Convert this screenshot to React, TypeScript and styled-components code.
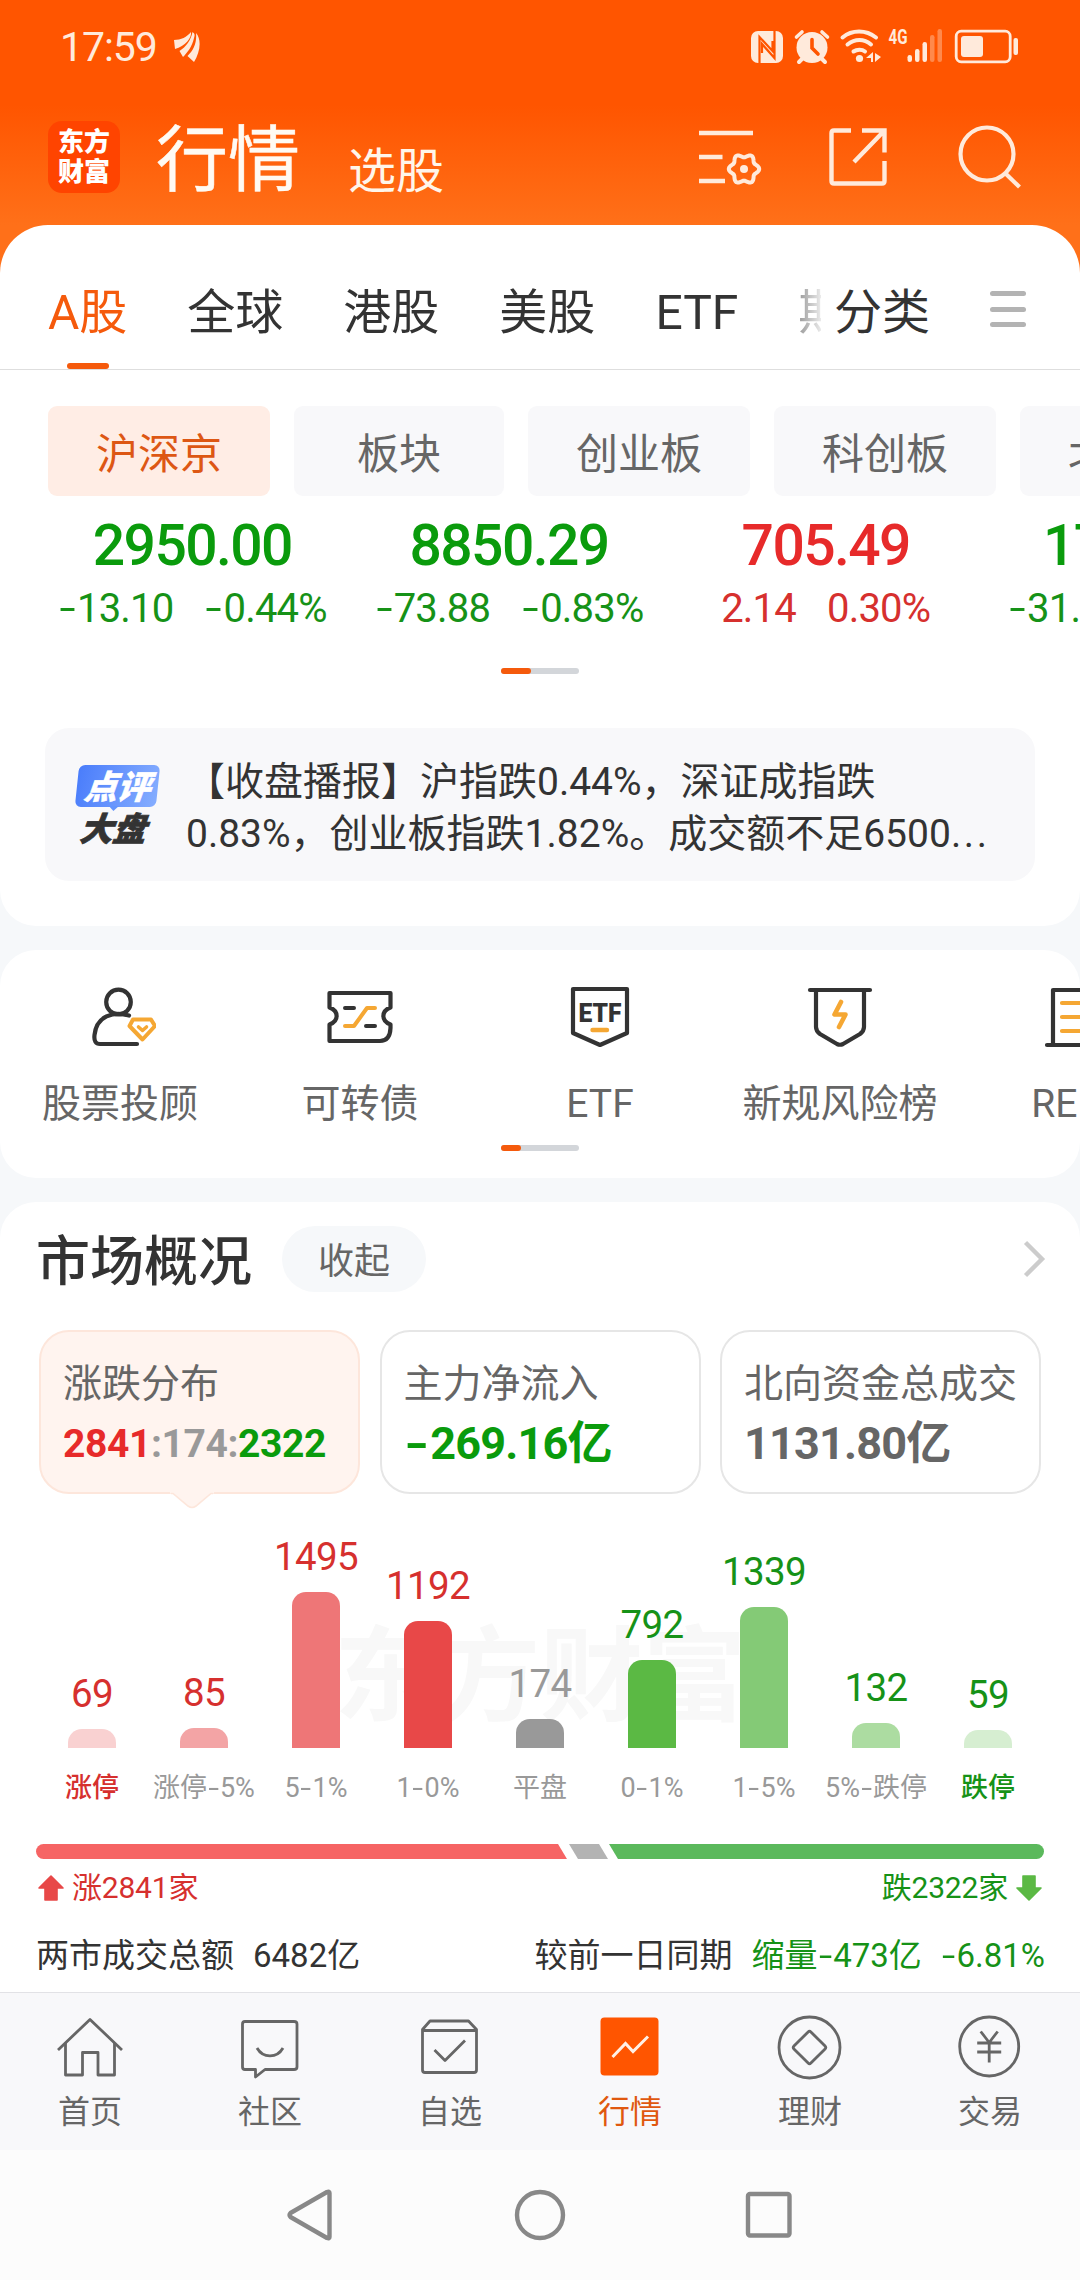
import React from "react";
import styled, { createGlobalStyle } from "styled-components";

const RED = "#d6302e";
const RED_STRONG = "#e72a2a";
const GREEN = "#169217";
const GREEN_STRONG = "#0a9b0c";
const ORANGE = "#f55a0c";
const INK = "#333333";
const GREY = "#666666";
const LIGHT = "#999999";
const CREAM = "#ffeadb";

const GlobalStyle = createGlobalStyle`
  * { box-sizing: border-box; }
  body {
    margin: 0;
    background: #f6f8fa;
    font-family: Roboto, "Noto Sans CJK SC", sans-serif;
    color: ${INK};
  }
`;

const Screen = styled.main`
  width: 1080px;
  height: 2280px;
  overflow: hidden;
  display: flex;
  flex-direction: column;
  background: #f6f8fa;
`;

const Masthead = styled.header`
  flex: none;
  height: 285px;
  margin-bottom: -60px;
  background: linear-gradient(#ff5500 0 105px, #ff7019 225px);
`;

const StatusBar = styled.div`
  height: 92px;
  padding: 2px 61px 0 60px;
  display: flex;
  align-items: center;
  color: ${CREAM};
`;

const Clock = styled.span`
  font-size: 41px;
  line-height: 48px;
  letter-spacing: -1.1px;
  font-weight: 400;
  margin-right: 17px;
`;

const StatusIcons = styled.div`
  margin-left: auto;
  display: flex;
  align-items: center;
`;

const TitleBar = styled.div`
  height: 130px;
  padding: 0 54px 0 48px;
  display: flex;
  align-items: center;
`;

const Logo = styled.div`
  width: 72px;
  height: 72px;
  border-radius: 14px;
  background: #ff4400;
  color: #fff;
  font-size: 26px;
  font-weight: 900;
  line-height: 30px;
  text-align: center;
  padding-top: 6px;
`;

const Title = styled.h1`
  margin: 8px 0 0 36px;
  font-size: 72px;
  line-height: 80px;
  font-weight: 400;
  -webkit-text-stroke: 0.5px #fffaf3;
  color: #fffaf3;
`;

const SubTitle = styled.span`
  margin: 30px auto 0 48px;
  font-size: 48px;
  line-height: 56px;
  color: #fff6ea;
`;

const TitleActions = styled.div`
  display: flex;
  gap: 57px;
`;

const Panel = styled.section<{ $h: number; $gap?: number }>`
  flex: none;
  height: ${(p) => p.$h}px;
  margin-bottom: ${(p) => p.$gap ?? 24}px;
  background: #fff;
  border-radius: 36px;
  overflow: hidden;
  display: flex;
  flex-direction: column;
`;

const TopPanel = styled(Panel)`
  border-radius: 48px 48px 36px 36px;
`;

const LastPanel = styled(Panel)`
  border-radius: 36px 36px 0 0;
`;

const TabBar = styled.nav`
  flex: none;
  height: 145px;
  border-bottom: 1px solid #dedede;
  display: flex;
  align-items: center;
  padding-right: 51px;
`;

const TabScroller = styled.div`
  width: 821px;
  height: 144px;
  flex: none;
  padding-left: 48px;
  display: flex;
  gap: 60px;
  overflow: hidden;
  mask-image: linear-gradient(to right, #000 770px, rgba(0, 0, 0, 0.1) 821px);
`;

const Tab = styled.span<{ $active?: boolean }>`
  flex: none;
  position: relative;
  font-size: 48px;
  line-height: 112px;
  padding-top: 32px;
  height: 144px;
  white-space: nowrap;
  color: ${(p) => (p.$active ? ORANGE : INK)};
  &::after {
    content: "";
    display: ${(p) => (p.$active ? "block" : "none")};
    position: absolute;
    left: calc(50% - 21px);
    bottom: 0;
    width: 42px;
    height: 6px;
    border-radius: 3px;
    background: ${ORANGE};
  }
`;

const Category = styled(Tab)`
  margin: 0 auto 0 13px;
`;

const MenuLines = styled.div`
  width: 36px;
  height: 36px;
  margin: 24px 3px 0 0;
  display: flex;
  flex-direction: column;
  justify-content: space-between;
  i {
    height: 5px;
    border-radius: 3px;
    background: #b3b3b3;
  }
`;

const Chips = styled.div`
  display: flex;
  gap: 24px;
  padding: 36px 0 0 48px;
  flex: none;
`;

const Chip = styled.button<{ $active?: boolean }>`
  flex: none;
  min-width: 210px;
  height: 90px;
  padding: 7px 48px 0;
  border: 0;
  border-radius: 9px;
  font-family: inherit;
  font-size: 42px;
  line-height: 60px;
  background: ${(p) => (p.$active ? "#ffede5" : "#f8f8fa")};
  color: ${(p) => (p.$active ? "#dd5714" : GREY)};
`;

const Indices = styled.div`
  display: flex;
  padding: 16px 0 0 34px;
  flex: none;
`;

const IndexCell = styled.div<{ $up?: boolean }>`
  flex: none;
  width: 316.7px;
  display: flex;
  flex-direction: column;
  align-items: center;
  color: ${(p) => (p.$up ? RED : GREEN)};
  strong {
    font-size: 57px;
    line-height: 68px;
    font-weight: 500;
    letter-spacing: -1.6px;
    color: ${(p) => (p.$up ? RED_STRONG : GREEN_STRONG)};
  }
`;

const Delta = styled.div`
  display: flex;
  gap: 31px;
  font-size: 40px;
  line-height: 48px;
  letter-spacing: -0.8px;
  margin-top: 5px;
`;

const MinusSign = styled.span`
  display: inline-block;
  margin: 0 0.1em;
  letter-spacing: 0;
  transform: scaleX(1.45);
`;

const Pager = styled.div<{ $top: number; $w: number }>`
  flex: none;
  width: 78px;
  height: 6px;
  margin: ${(p) => p.$top}px auto 0;
  border-radius: 3px;
  background: #d3d6da;
  &::before {
    content: "";
    display: block;
    width: ${(p) => p.$w}px;
    height: 6px;
    border-radius: 3px;
    background: ${ORANGE};
  }
`;

const News = styled.article`
  flex: none;
  margin: 54px 45px 0;
  height: 153px;
  border-radius: 24px;
  background: #f8f8fa;
  display: flex;
  padding: 28px 36px 0 30px;
`;

const NewsBadge = styled.div`
  width: 85px;
  margin: 9px 26px 0 0;
  flex: none;
  display: flex;
  flex-direction: column;
  align-items: center;
  font-style: italic;
  font-weight: 900;
  font-size: 33px;
`;

const BadgeTop = styled.div`
  position: relative;
  width: 81px;
  height: 42px;
  border-radius: 6px;
  transform: skewX(-6deg);
  background: linear-gradient(100deg, #4a7dfb, #85adff);
  color: #fff;
  text-align: center;
  line-height: 42px;
  padding-top: 2px;
  -webkit-text-stroke: 0.5px #fff;
  &::after {
    content: "";
    position: absolute;
    left: 34px;
    top: 41px;
    border: 5px solid transparent;
    border-top-color: #6394fd;
    border-bottom: 0;
  }
`;

const BadgeBottom = styled.div`
  line-height: 36px;
  margin: 5px 9px 0 0;
  transform: skewX(-6deg);
  -webkit-text-stroke: 0.8px ${INK};
`;

const NewsText = styled.p`
  margin: 0;
  font-size: 39px;
  line-height: 52px;
  white-space: nowrap;
`;

const Dots = styled.span`
  letter-spacing: 2.6px;
`;

const Shortcuts = styled.div`
  display: flex;
  flex: none;
  padding-top: 31px;
`;

const Shortcut = styled.div`
  flex: none;
  width: 240px;
  display: flex;
  flex-direction: column;
  align-items: center;
  font-size: 39px;
  line-height: 48px;
  color: ${GREY};
  svg {
    margin-bottom: 27px;
  }
`;

const SectionHead = styled.div`
  flex: none;
  height: 114px;
  padding: 24px 34px 24px 36px;
  display: flex;
  align-items: center;
  h2 {
    margin: 7px 30px 0 0;
    font-size: 54px;
    line-height: 66px;
    font-weight: 500;
  }
`;

const Pill = styled.button`
  width: 144px;
  height: 66px;
  padding: 5px 0 0;
  border: 0;
  border-radius: 33px;
  background: #f6f8fa;
  font-family: inherit;
  font-size: 36px;
  line-height: 60px;
  color: ${GREY};
  margin-right: auto;
`;

const StatCards = styled.div`
  flex: none;
  display: flex;
  gap: 19.5px;
  padding: 14px 39px 0;
`;

const StatCard = styled.div<{ $active?: boolean }>`
  position: relative;
  flex: none;
  width: 321px;
  height: 164px;
  padding: 28px 0 0 22px;
  border-radius: 30px;
  border: 2px solid ${(p) => (p.$active ? "#fde6db" : "#e6e6e6")};
  background: ${(p) => (p.$active ? "#fff4ef" : "#fff")};
  font-size: 39px;
  line-height: 48px;
  color: ${GREY};
  white-space: nowrap;
`;

const StatTail = styled.svg`
  position: absolute;
  left: 129px;
  top: 159px;
`;

const StatValue = styled.div<{ $size: number; $color?: string }>`
  font-size: ${(p) => p.$size}px;
  font-weight: 700;
  line-height: 56px;
  letter-spacing: ${(p) => (p.$size > 40 ? -0.8 : -0.4)}px;
  margin-top: 8px;
  color: ${(p) => p.$color ?? GREY};
`;

const Tone = styled.span<{ $color: string }>`
  color: ${(p) => p.$color};
`;

const Chart = styled.div`
  flex: none;
  position: relative;
  height: 314px;
  padding: 0 36px;
  display: flex;
`;

const Watermark = styled.div`
  position: absolute;
  left: 334px;
  top: 119px;
  font-size: 103px;
  line-height: 130px;
  font-weight: 700;
  color: #f8f8f8;
`;

const BarColumn = styled.div<{ $color: string }>`
  position: relative;
  flex: none;
  width: 112px;
  height: 314px;
  display: flex;
  flex-direction: column;
  align-items: center;
  justify-content: flex-end;
  font-size: 38.5px;
  line-height: 46px;
  letter-spacing: -0.6px;
  color: ${(p) => p.$color};
`;

const Bar = styled.div<{ $fill: string }>`
  width: 48px;
  margin: 12px 0 20px;
  border-radius: 14px 14px 0 0;
  background: ${(p) => p.$fill};
`;

const BarLabel = styled.div<{ $color: string; $bold: boolean }>`
  font-size: 27px;
  line-height: 40px;
  letter-spacing: 0;
  white-space: nowrap;
  font-weight: ${(p) => (p.$bold ? 500 : 400)};
  color: ${(p) => p.$color};
`;

const RatioBar = styled.div`
  flex: none;
  height: 15px;
  margin: 36px 36px 0;
  display: flex;
`;

const RatioUp = styled.div`
  width: 531px;
  background: #f66464;
  border-radius: 8px 0 0 8px;
  clip-path: polygon(0 0, calc(100% - 9px) 0, 100% 100%, 0 100%);
`;

const RatioFlat = styled.div`
  width: 39px;
  margin: 0 1px 0 2px;
  background: #b3b3b3;
  clip-path: polygon(0 0, calc(100% - 9px) 0, 100% 100%, 9px 100%);
`;

const RatioDown = styled.div`
  flex: 1;
  background: #5bb95c;
  border-radius: 0 8px 8px 0;
  clip-path: polygon(0 0, 100% 0, 100% 100%, 9px 100%);
`;

const CountRow = styled.div`
  flex: none;
  height: 56px;
  padding: 1px 37px 0;
  display: flex;
  align-items: center;
  justify-content: space-between;
  font-size: 30px;
  line-height: 40px;
  letter-spacing: -0.2px;
`;

const Count = styled.div<{ $color: string }>`
  display: flex;
  align-items: center;
  gap: 7px;
  color: ${(p) => p.$color};
`;

const TurnoverRow = styled.div`
  flex: none;
  height: 78px;
  padding: 4px 35px 0 36px;
  display: flex;
  align-items: center;
  gap: 19px;
  font-size: 33px;
  line-height: 44px;
  white-space: nowrap;
`;

const Spacer = styled.div`
  flex: 1;
`;

const TabNav = styled.nav`
  flex: none;
  height: 158px;
  border-top: 1px solid #e2e2e6;
  background: #f8f8fa;
  display: flex;
  padding-top: 19px;
`;

const NavItem = styled.div<{ $active?: boolean }>`
  width: 180px;
  display: flex;
  flex-direction: column;
  align-items: center;
  gap: 12px;
  font-size: 32px;
  line-height: 40px;
  color: ${(p) => (p.$active ? "#e0580f" : GREY)};
`;

const SystemNav = styled.footer`
  flex: none;
  height: 130px;
  background: #fcfcfc;
  display: flex;
  justify-content: center;
  gap: 169px;
  align-items: center;
`;

const stroke = (color: string, width: number) => ({
  fill: "none",
  stroke: color,
  strokeWidth: width,
});

/** Renders a figure with the wide minus used throughout the quotes. */
const Figure = ({ text }: { text: string }) => {
  const [before, after] = text.split("-");
  if (after === undefined) return <span>{text}</span>;
  return (
    <span>
      {before}
      <MinusSign>-</MinusSign>
      {after}
    </span>
  );
};

const WingIcon = () => (
  <svg width="27" height="30" viewBox="0 0 27 30" fill={CREAM}>
    <path d="M0 8 C7 8 13 5 17 0 C18 6 11 14 1 17Z" />
    <path d="M18.500 0 C21 2 21 3 20 6 C18 15 13 21 9 25 L5.500 19 C12 15 17 8 18.500 0Z" />
    <path d="M22 1 C28 8 26 20 20 30 L13.500 24 C20 18 23 10 22 1Z" />
  </svg>
);

const StatusGlyphs = () => (
  <svg width="268" height="38" viewBox="752 27 268 38" fill={CREAM}>
    <rect x="752" y="30" width="32" height="32" rx="7" />
    <g {...stroke("#ff5500", 2.2)}>
      <path d="M760.500 62 V36 L773.500 50 V40 M775.500 30 V57 L763 43 V52" />
    </g>
    <circle cx="813" cy="46.500" r="15.500" />
    <path d="M797.500 36 L803 31 M828.500 36 L823 31" {...stroke(CREAM, 3.6)} strokeLinecap="round" />
    <path d="M803 58 L800 61 M823 58 L826 61" {...stroke(CREAM, 4)} strokeLinecap="round" />
    <path d="M813 38.500 V47 L819 53" {...stroke("#ff5500", 3.6)} strokeLinecap="round" />
    <g {...stroke(CREAM, 4)} strokeLinecap="round">
      <path d="M843.500 36.500 C853 28.500 867 28.500 877 36.500" />
      <path d="M848.500 43.500 C856 37.500 865 37.500 872 43.500" />
      <path d="M854.500 50.500 C858 48 863 48 866 50.500" />
    </g>
    <circle cx="860.500" cy="57.500" r="3.600" />
    <path d="M867 57 L874 51 V61 H872 V57Z M876 52 V61 L882 56Z" />
    <text x="889.500" y="43" fontSize="20" fontWeight="700" textLength="19" lengthAdjust="spacingAndGlyphs">4G</text>
    <rect x="908.500" y="54" width="4.500" height="7" rx="2.200" />
    <rect x="916" y="48" width="4.500" height="13" rx="2.200" />
    <rect x="923.500" y="41" width="4.500" height="20" rx="2.200" />
    <rect x="931" y="34" width="4.500" height="27" rx="2.200" opacity="0.35" />
    <rect x="938.500" y="28" width="4.500" height="33" rx="2.200" opacity="0.35" />
    <rect x="957.200" y="30.200" width="54" height="30.600" rx="5" {...stroke(CREAM, 2.8)} />
    <rect x="962" y="35" width="22" height="21" rx="3" />
    <rect x="1014.500" y="37" width="4.500" height="17" rx="2" />
  </svg>
);

const gearPath = (() => {
  const steps = 72;
  const pts: string[] = [];
  for (let i = 0; i < steps; i++) {
    const a = (i / steps) * Math.PI * 2;
    const r = 13.4 + 1.8 * Math.cos(6 * a);
    pts.push(`${(48 + r * Math.cos(a)).toFixed(2)} ${(48 + r * Math.sin(a)).toFixed(2)}`);
  }
  return `M${pts.join("L")}Z`;
})();

const FilterIcon = () => (
  <svg width="72" height="72" viewBox="0 0 72 72">
    <path d="M3 12 H57 M3 36 H26.500 M3 60 H29" {...stroke(CREAM, 4.6)} />
    <path d={gearPath} {...stroke(CREAM, 4)} strokeLinejoin="round" />
    <circle cx="48" cy="48" r="4" fill={CREAM} />
  </svg>
);

const ShareIcon = () => (
  <svg width="72" height="72" viewBox="0 0 72 72">
    <path d="M26 9.500 H9 Q6.500 9.500 6.500 12 V60 Q6.500 62.500 9 62.500 H57 Q59.500 62.500 59.500 60 V40" {...stroke(CREAM, 4.4)} />
    <path d="M37 9.500 H59.500 V31.500 M59 10 L29 41" {...stroke(CREAM, 4.4)} />
  </svg>
);

const SearchIcon = () => (
  <svg width="72" height="72" viewBox="0 0 72 72">
    <circle cx="33" cy="33" r="26.500" {...stroke(CREAM, 4.2)} />
    <path d="M51 52 L65.500 66" {...stroke(CREAM, 4.2)} />
  </svg>
);

const AMBER = "#f5a733";

const AdvisorIcon = () => (
  <svg width="72" height="72" viewBox="0 0 72 72">
    <g {...stroke(INK, 4.2)} strokeLinecap="round" strokeLinejoin="round">
      <circle cx="34.500" cy="21" r="12.300" />
      <path d="M45 34.500 C29 30 12.500 35 10.500 54 Q9.500 63 16 63 H53" />
    </g>
    <path d="M50 38.500 H68 L72 45 L59.500 58.500 L46.500 45Z" transform="translate(-1 0)" {...stroke(AMBER, 4)} strokeLinejoin="round" />
    <path d="M54.500 46 L58.500 49.500 L62.500 46" {...stroke(AMBER, 3.600)} strokeLinecap="round" strokeLinejoin="round" />
  </svg>
);

const BondIcon = () => (
  <svg width="72" height="72" viewBox="0 0 72 72">
    <path
      d="M5.500 12 H66.500 V26.500 C57 30 57 40 66.500 43.500 V47 Q66 60 56 60 H5.500 V43.500 C15 40 15 30 5.500 26.500Z"
      {...stroke(INK, 4.200)}
      strokeLinejoin="round"
    />
    <path d="M21 27 H30 M42 45 H51" {...stroke(INK, 4)} strokeLinecap="round" />
    <path d="M21 45 H30 L43 27 H51" {...stroke(AMBER, 4)} strokeLinecap="round" strokeLinejoin="round" />
  </svg>
);

const EtfIcon = () => (
  <svg width="72" height="72" viewBox="0 0 72 72">
    <path d="M9 8 H63 V52 L36 64 L9 52Z" {...stroke(INK, 4.200)} strokeLinejoin="round" />
    <text x="14.500" y="41" fontSize="26" fontWeight="900" fill={INK} textLength="43" lengthAdjust="spacingAndGlyphs">ETF</text>
    <path d="M28.500 49 H43" {...stroke(AMBER, 4.400)} strokeLinecap="round" />
  </svg>
);

const RiskIcon = () => (
  <svg width="72" height="72" viewBox="0 0 72 72">
    <g {...stroke(INK, 4.200)} strokeLinecap="round" strokeLinejoin="round">
      <path d="M6 9 H66" />
      <path d="M12 9 V46 Q12 50 16 53 L33 63 Q36 64.500 39 63 L56 53 Q60 50 60 46 V9" />
    </g>
    <path d="M37 21 L30.500 33.500 H41.500 L35 46" {...stroke(AMBER, 4.600)} strokeLinecap="round" strokeLinejoin="round" />
  </svg>
);

const ReitsIcon = () => (
  <svg width="72" height="72" viewBox="0 0 72 72">
    <path d="M3 64 H69 M9 64 V9 H63 V64" {...stroke(INK, 4.200)} strokeLinecap="round" strokeLinejoin="round" />
    <path d="M18 22 H48 M18 36 H48 M18 50 H48" {...stroke(AMBER, 4.200)} strokeLinecap="round" />
  </svg>
);

const Chevron = () => (
  <svg width="24" height="40" viewBox="0 0 24 40">
    <path d="M3.500 3.500 L20 20 L3.500 36.500" {...stroke("#cccccc", 4.400)} />
  </svg>
);

const Arrow = ({ down, color }: { down?: boolean; color: string }) => (
  <svg width="28" height="28" viewBox="0 0 28 28">
    <path
      d="M14 2 L26 14 H20 V26 H8 V14 H2Z"
      fill={color}
      stroke={color}
      strokeWidth="1.600"
      strokeLinejoin="round"
      transform={down ? "rotate(180 14 14)" : undefined}
    />
  </svg>
);

const NavIcon = ({ children }: { children: React.ReactNode }) => (
  <svg width="68" height="68" viewBox="0 0 68 68" {...stroke(GREY, 2.8)} strokeLinejoin="round">
    {children}
  </svg>
);

const navItems = [
  {
    label: "首页",
    icon: (
      <NavIcon>
        <path d="M2 38 L34 7.500 L66 38" />
        <path d="M9.500 31 V63 H26.500 V40.500 H42 V63 H58.500 V31" />
      </NavIcon>
    ),
  },
  {
    label: "社区",
    icon: (
      <NavIcon>
        <path d="M9 9.500 H58 Q61 9.500 61 12 V55 Q61 57.500 58 57.500 H29 L19.500 65 V57.500 H9 Q6.500 57.500 6.500 55 V12 Q6.500 9.500 9 9.500Z" />
        <path d="M21 36 C27 46.500 41 46.500 47 36" />
      </NavIcon>
    ),
  },
  {
    label: "自选",
    icon: (
      <NavIcon>
        <path d="M6.500 17.500 L14 9 H52.500 L60.500 17.500 V58 Q60.500 60.500 58 60.500 H9 Q6.500 60.500 6.500 58Z M6.500 18.500 H60.500" />
        <path d="M18.500 38 L29 48.500 L49 28.500" />
      </NavIcon>
    ),
  },
  {
    label: "行情",
    active: true,
    icon: (
      <NavIcon>
        <rect x="4.500" y="5.500" width="58" height="58" rx="4" fill="#ff5500" stroke="none" />
        <path d="M16.500 45 L29.500 31.500 L37 39.500 L52 24.500" stroke="#fff0e6" strokeWidth="3" strokeLinejoin="miter" />
      </NavIcon>
    ),
  },
  {
    label: "理财",
    icon: (
      <NavIcon>
        <circle cx="33.500" cy="35.500" r="30.500" />
        <rect x="21.500" y="23.500" width="24" height="24" rx="2" transform="rotate(45 33.500 35.500)" />
      </NavIcon>
    ),
  },
  {
    label: "交易",
    icon: (
      <NavIcon>
        <g transform="translate(-0.800 0)">
          <circle cx="34" cy="34.500" r="29.500" />
          <path d="M25.500 19.500 L34 30.500 L42.500 19.500 M22 31 H46 M22 40 H46 M34 30.500 V50.500" />
        </g>
      </NavIcon>
    ),
  },
];

const tabs = ["A股", "全球", "港股", "美股", "ETF", "期货"];
const chips = ["沪深京", "板块", "创业板", "科创板", "北交所"];

const indices = [
  { value: "2950.00", change: "-13.10", pct: "-0.44%" },
  { value: "8850.29", change: "-73.88", pct: "-0.83%" },
  { value: "705.49", change: "2.14", pct: "0.30%", up: true },
  { value: "1700.32", change: "-31.54", pct: "-1.82%" },
];

const shortcuts = [
  { label: "股票投顾", icon: <AdvisorIcon /> },
  { label: "可转债", icon: <BondIcon /> },
  { label: "ETF", icon: <EtfIcon /> },
  { label: "新规风险榜", icon: <RiskIcon /> },
  { label: "REITs", icon: <ReitsIcon /> },
];

const distribution = [
  { label: "涨停", count: 69, fill: "#f9d1d1", text: RED, tone: RED },
  { label: "涨停-5%", count: 85, fill: "#f3a4a5", text: RED },
  { label: "5-1%", count: 1495, fill: "#ee7677", text: RED },
  { label: "1-0%", count: 1192, fill: "#e84848", text: RED },
  { label: "平盘", count: 174, fill: "#999999", text: LIGHT },
  { label: "0-1%", count: 792, fill: "#5bb944", text: GREEN },
  { label: "1-5%", count: 1339, fill: "#84ca76", text: GREEN },
  { label: "5%-跌停", count: 132, fill: "#acdca1", text: GREEN },
  { label: "跌停", count: 59, fill: "#d6eed1", text: GREEN, tone: GREEN },
];

const barHeight = (count: number) => 12 + count * 0.0965;

export default function App() {
  return (
    <>
      <GlobalStyle />
      <Screen>
        <Masthead>
          <StatusBar>
            <Clock>17:59</Clock>
            <WingIcon />
            <StatusIcons>
              <StatusGlyphs />
            </StatusIcons>
          </StatusBar>
          <TitleBar>
            <Logo>
              东方
              <br />
              财富
            </Logo>
            <Title>行情</Title>
            <SubTitle>选股</SubTitle>
            <TitleActions>
              <FilterIcon />
              <ShareIcon />
              <SearchIcon />
            </TitleActions>
          </TitleBar>
        </Masthead>

        <TopPanel $h={701}>
          <TabBar>
            <TabScroller>
              {tabs.map((tab, i) => (
                <Tab key={tab} $active={i === 0}>
                  {tab}
                </Tab>
              ))}
            </TabScroller>
            <Category>分类</Category>
            <MenuLines>
              <i />
              <i />
              <i />
            </MenuLines>
          </TabBar>
          <Chips>
            {chips.map((chip, i) => (
              <Chip key={chip} $active={i === 0}>
                {chip}
              </Chip>
            ))}
          </Chips>
          <Indices>
            {indices.map((item) => (
              <IndexCell key={item.value} $up={item.up}>
                <strong>{item.value}</strong>
                <Delta>
                  <Figure text={item.change} />
                  <Figure text={item.pct} />
                </Delta>
              </IndexCell>
            ))}
          </Indices>
          <Pager $top={35} $w={30} />
          <News>
            <NewsBadge>
              <BadgeTop>点评</BadgeTop>
              <BadgeBottom>大盘</BadgeBottom>
            </NewsBadge>
            <NewsText>
              【收盘播报】沪指跌0.44%，深证成指跌
              <br />
              0.83%，创业板指跌1.82%。成交额不足6500<Dots>...</Dots>
            </NewsText>
          </News>
        </TopPanel>

        <Panel $h={228}>
          <Shortcuts>
            {shortcuts.map((item) => (
              <Shortcut key={item.label}>
                {item.icon}
                {item.label}
              </Shortcut>
            ))}
          </Shortcuts>
          <Pager $top={17} $w={20} />
        </Panel>

        <LastPanel $h={790} $gap={0}>
          <SectionHead>
            <h2>市场概况</h2>
            <Pill>收起</Pill>
            <Chevron />
          </SectionHead>
          <StatCards>
            <StatCard $active>
              涨跌分布
              <StatValue $size={39}>
                <Tone $color={RED_STRONG}>2841</Tone>
                <Tone $color="#999999">:174:</Tone>
                <Tone $color={GREEN_STRONG}>2322</Tone>
              </StatValue>
              <StatTail width="44" height="18" viewBox="0 0 44 18">
                <path d="M0 0 H44 V2.500 H41 L26 15 Q22 18 18 15 L3 2.500 H0Z" fill="#fff4ef" />
                <path d="M1 2.500 H3 L18 15 Q22 18 26 15 L41 2.500 H43" {...stroke("#fde6db", 1.600)} />
              </StatTail>
            </StatCard>
            <StatCard>
              主力净流入
              <StatValue $size={45} $color={GREEN_STRONG}>
                <Figure text="-269.16亿" />
              </StatValue>
            </StatCard>
            <StatCard>
              北向资金总成交
              <StatValue $size={45}>1131.80亿</StatValue>
            </StatCard>
          </StatCards>
          <Chart>
            <Watermark>东方财富</Watermark>
            {distribution.map((item) => (
              <BarColumn key={item.label} $color={item.text}>
                {item.count}
                <Bar $fill={item.fill} style={{ height: barHeight(item.count) }} />
                <BarLabel $color={item.tone ?? LIGHT} $bold={!!item.tone}>
                  <Figure text={item.label} />
                </BarLabel>
              </BarColumn>
            ))}
          </Chart>
          <RatioBar>
            <RatioUp />
            <RatioFlat />
            <RatioDown />
          </RatioBar>
          <CountRow>
            <Count $color={RED}>
              <Arrow color="#e84848" />
              涨2841家
            </Count>
            <Count $color={GREEN}>
              跌2322家
              <Arrow color="#5bb944" down />
            </Count>
          </CountRow>
          <TurnoverRow>
            <span>两市成交总额</span>
            <span>6482亿</span>
            <Spacer />
            <span>较前一日同期</span>
            <Tone $color={GREEN}>
              <Figure text="缩量-473亿" />
            </Tone>
            <Tone $color={GREEN}>
              <Figure text="-6.81%" />
            </Tone>
          </TurnoverRow>
        </LastPanel>

        <TabNav>
          {navItems.map((item) => (
            <NavItem key={item.label} $active={item.active}>
              {item.icon}
              {item.label}
            </NavItem>
          ))}
        </TabNav>
        <SystemNav>
          <svg width="60" height="60" viewBox="0 0 60 60" {...stroke("#888888", 4.400)} strokeLinejoin="round">
            <path d="M48.500 8 V52 Q48.500 54 46 53 L9.500 32 Q7.500 30 9.500 28 L46 7 Q48.500 6 48.500 8Z" />
          </svg>
          <svg width="60" height="60" viewBox="0 0 60 60" {...stroke("#888888", 4.400)}>
            <circle cx="30" cy="30" r="23" />
          </svg>
          <svg width="60" height="60" viewBox="0 0 60 60" {...stroke("#888888", 4.400)}>
            <rect x="9" y="9" width="41.500" height="41.500" rx="2" />
          </svg>
        </SystemNav>
      </Screen>
    </>
  );
}
